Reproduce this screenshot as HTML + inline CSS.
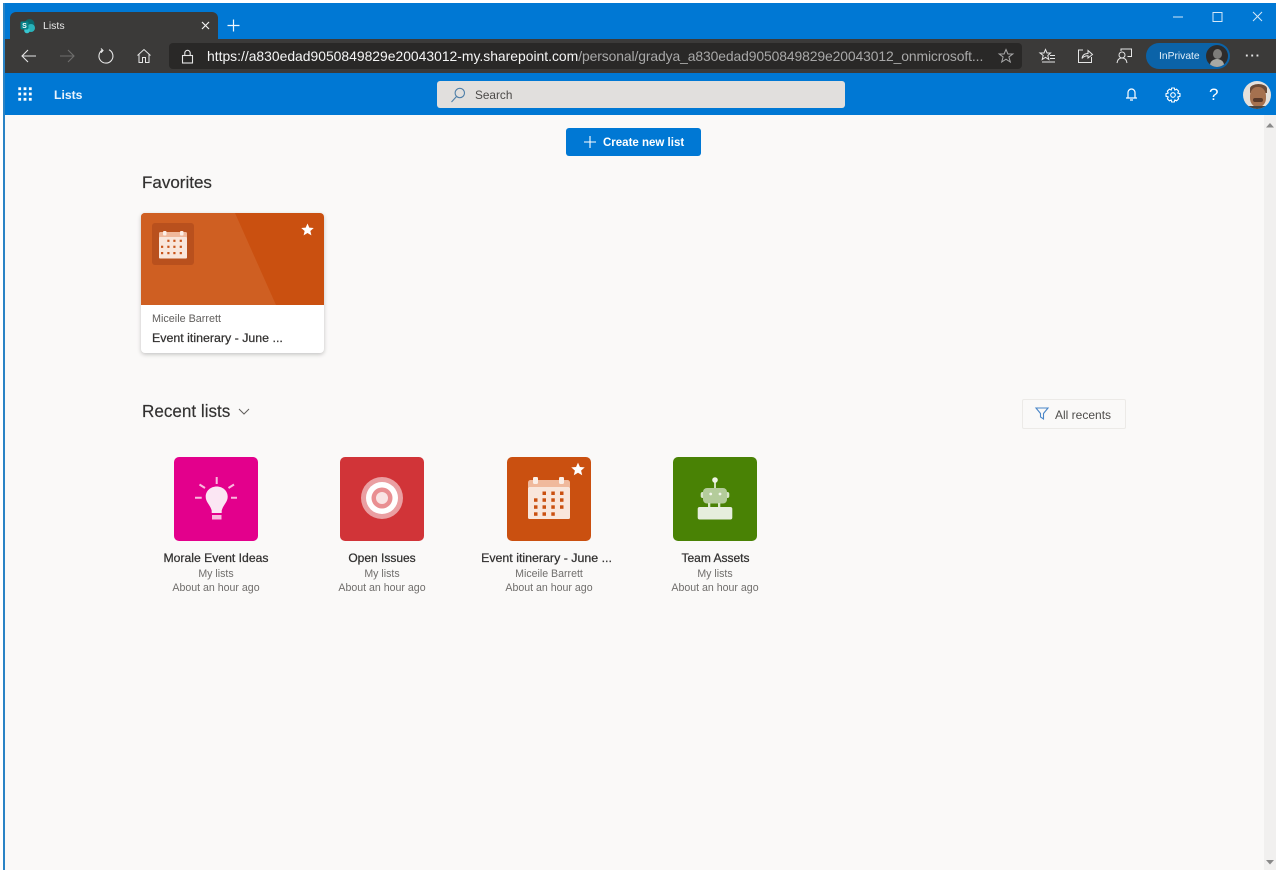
<!DOCTYPE html>
<html lang="en">
<head>
<meta charset="utf-8">
<title>Lists</title>
<style>
html,body{margin:0;padding:0;background:#fff}
body{width:1280px;height:874px;position:relative;overflow:hidden;font-family:"Liberation Sans",sans-serif}
.a{position:absolute}
.t{position:absolute;white-space:nowrap;line-height:1}
svg{position:absolute;overflow:visible}
.ctr{text-align:center;width:170px}
.h{color:#323130;-webkit-text-stroke:.25px #323130;font-size:12px}
.m{font-size:10.600px;color:#706e6c}
</style>
</head>
<body>
<!-- window regions -->
<div class="a" style="left:4px;top:3px;width:1272px;height:36px;background:#0078d4"></div>
<div class="a" style="left:4px;top:39px;width:1272px;height:34px;background:#3b3a39"></div>
<div class="a" style="left:4px;top:73px;width:1272px;height:42px;background:#0078d4"></div>
<div class="a" style="left:4px;top:115px;width:1272px;height:755px;background:#faf9f8"></div>
<div class="a" style="left:3px;top:3px;width:2px;height:867px;background:#2a83c5"></div>
<!-- scrollbar -->
<div class="a" style="left:1264px;top:115px;width:12px;height:755px;background:#f1f0ef"></div>
<svg style="left:0;top:0" width="1280" height="874"><path d="M1266 127.500L1270 123L1274 127.500Z" fill="#8a8a8a"/><path d="M1266 860L1274 860L1270 864.500Z" fill="#8a8a8a"/></svg>

<!-- tab -->
<div class="a" style="left:10px;top:12px;width:208px;height:27px;background:#3b3a39;border-radius:6px 6px 0 0"></div>
<svg style="left:20px;top:18px" width="16" height="16" viewBox="0 0 16 16"><circle cx="9.500" cy="6" r="5" fill="#0b6a6e"/><circle cx="11" cy="10" r="4" fill="#29b3ba"/><circle cx="7" cy="12.500" r="2.800" fill="#37c6d0"/><rect x="0.500" y="3.500" width="8" height="8" rx="1.500" fill="#05838b"/><text x="4.500" y="10" font-family="Liberation Sans" font-size="7" font-weight="700" fill="#fff" text-anchor="middle">S</text></svg>
<div class="t" style="left:43px;top:20.500px;font-size:10.500px;color:#e8e8e8">Lists</div>
<svg style="left:201px;top:21px" width="9" height="9" viewBox="0 0 9 9"><path d="M1 1L8 8M8 1L1 8" stroke="#f2f2f2" stroke-width="1.200" fill="none"/></svg>
<svg style="left:227px;top:19px" width="13" height="13" viewBox="0 0 13 13"><path d="M6.500 0.500V12.500M0.500 6.500H12.500" stroke="#f2f8fd" stroke-width="1.200" fill="none"/></svg>

<!-- window controls -->
<svg style="left:1170px;top:8px" width="100" height="18" viewBox="0 0 100 18" fill="none" stroke="#d5e8f7" stroke-width="1"><path d="M3 9H13"/><rect x="43" y="4.500" width="9" height="9"/><path d="M83 4L92 13M92 4L83 13"/></svg>

<!-- toolbar icons -->
<svg style="left:20px;top:47px" width="18" height="18" viewBox="0 0 18 18" fill="none" stroke="#e6e6e6" stroke-width="1.100"><path d="M2 9H16M8 3L2 9L8 15"/></svg>
<svg style="left:58px;top:47px" width="18" height="18" viewBox="0 0 18 18" fill="none" stroke="#6f6e6d" stroke-width="1.100"><path d="M2 9H16M10 3L16 9L10 15"/></svg>
<svg style="left:97px;top:47px" width="18" height="18" viewBox="0 0 18 18" fill="none" stroke="#e6e6e6" stroke-width="1.100"><path d="M5.500 3A7 7 0 1 0 12 2.800M4 1.500L6 3.500L4 5.800"/></svg>
<svg style="left:136px;top:48px" width="16" height="16" viewBox="0 0 16 16" fill="none" stroke="#e6e6e6" stroke-width="1"><path d="M1.500 7.500L8 1.500L14.500 7.500M3 6.500V14.500H6.500V9.500H9.500V14.500H13V6.500"/></svg>

<!-- address bar -->
<div class="a" style="left:169px;top:43px;width:853px;height:26px;background:#292827;border-radius:4px"></div>
<svg style="left:181px;top:49px" width="13" height="15" viewBox="0 0 13 15" fill="none" stroke="#e6e6e6" stroke-width="1.100"><rect x="1.500" y="6.500" width="10" height="7.500"/><path d="M3.800 6.500V4A2.700 2.700 0 0 1 9.200 4V6.500"/></svg>
<div class="t" style="left:207px;top:50px;font-size:13.900px;color:#f5f5f5">https://a830edad9050849829e20043012-my.sharepoint.com<span style="color:#a8a8a8;letter-spacing:-.1px">/personal/gradya_a830edad9050849829e20043012_onmicrosoft...</span></div>
<svg style="left:998px;top:48px" width="16" height="16" viewBox="0 0 16 16" fill="none" stroke="#a9a9a9" stroke-width="1"><path d="M8 1.500L9.900 6H14.800L10.900 9L12.300 14L8 11.200L3.700 14L5.100 9L1.200 6H6.100Z"/></svg>

<svg style="left:1039px;top:48px" width="17" height="16" viewBox="0 0 17 16" fill="none" stroke="#e6e6e6" stroke-width="1"><path d="M6.500 1.500L8 5H11.500L8.800 7.500L9.800 11.500L6.500 9.300L3.200 11.500L4.200 7.500L1 5H5Z"/><path d="M11 7.500H16M11 10.500H16M3 14H16"/></svg>
<svg style="left:1077px;top:48px" width="16" height="16" viewBox="0 0 16 16" fill="none" stroke="#e6e6e6" stroke-width="1"><path d="M6 2H1.500V14.500H14.500V9"/><path d="M5 10.500C5.500 7 8 5.500 11 5.500V2.500L15.500 6.500L11 10V7.800C9 7.800 6.500 8.500 5 10.500Z"/></svg>
<svg style="left:1116px;top:48px" width="17" height="16" viewBox="0 0 17 16" fill="none" stroke="#e6e6e6" stroke-width="1"><circle cx="6" cy="7" r="3"/><path d="M1 15C1.500 11.500 3.500 10 6 10C8.500 10 10.500 11.500 11 15"/><path d="M5 3V1H15.500V8.500H11.500"/></svg>

<!-- InPrivate pill -->
<div class="a" style="left:1146px;top:43px;width:84px;height:26px;background:#0b63a8;border-radius:13px"></div>
<div class="t" style="left:1159px;top:52px;font-size:10.300px;color:#e3f0fa">InPrivate</div>
<div class="a" style="left:1206px;top:45px;width:22px;height:22px;border-radius:50%;background:#2e2c2b;overflow:hidden">
  <div class="a" style="left:7px;top:4px;width:9px;height:10px;border-radius:50%;background:#7d7c79"></div>
  <div class="a" style="left:4px;top:14px;width:14px;height:12px;border-radius:50%;background:#a9a9a4"></div>
</div>
<div class="t" style="left:1245px;top:49px;font-size:13px;color:#e6e6e6;letter-spacing:1px;font-weight:700">···</div>

<!-- app header -->
<svg style="left:18px;top:87px" width="14" height="14" viewBox="0 0 14 14" fill="#fff"><rect x="0.300" y="0.300" width="2.800" height="2.800"/><rect x="5.600" y="0.300" width="2.800" height="2.800"/><rect x="10.900" y="0.300" width="2.800" height="2.800"/><rect x="0.300" y="5.600" width="2.800" height="2.800"/><rect x="5.600" y="5.600" width="2.800" height="2.800"/><rect x="10.900" y="5.600" width="2.800" height="2.800"/><rect x="0.300" y="10.900" width="2.800" height="2.800"/><rect x="5.600" y="10.900" width="2.800" height="2.800"/><rect x="10.900" y="10.900" width="2.800" height="2.800"/></svg>
<div class="t" style="left:54px;top:89px;font-size:12.200px;font-weight:700;color:#eaf4fc">Lists</div>

<div class="a" style="left:437px;top:81px;width:408px;height:27px;background:#e1dfdd;border-radius:3px"></div>
<svg style="left:450px;top:87px" width="16" height="16" viewBox="0 0 16 16" fill="none" stroke="#4f7fa8" stroke-width="1.100"><circle cx="9.800" cy="6" r="4.700"/><path d="M6.500 9.500L1.500 15"/></svg>
<div class="t" style="left:475px;top:90px;font-size:11.800px;color:#4c4a48">Search</div>

<svg style="left:1125px;top:87px" width="13" height="15" viewBox="0 0 13 15" fill="none" stroke="#fff" stroke-width="1.200"><path d="M3 10.500V5.500A3.500 3.500 0 0 1 10 5.500V10.500M1 11H12M5 13H8"/></svg>
<svg style="left:1165px;top:87px" width="16" height="16" viewBox="0 0 16 16" fill="none" stroke="#fff" stroke-width="1.100"><circle cx="8" cy="8" r="2.300"/><path d="M6.700 1H9.300L9.800 3L11.600 2.200L13.600 4.100L12.800 6L15 6.700V9.300L12.800 10L13.600 11.900L11.600 13.800L9.800 13L9.300 15H6.700L6.200 13L4.400 13.800L2.400 11.900L3.200 10L1 9.300V6.700L3.200 6L2.400 4.100L4.400 2.200L6.200 3Z"/></svg>
<div class="t" style="left:1209px;top:86px;font-size:17px;color:#fff">?</div>
<div class="a" style="left:1243px;top:81px;width:28px;height:28px;border-radius:50%;background:#e4e0db;overflow:hidden">
  <div class="a" style="left:7px;top:3px;width:17px;height:9px;background:#6a4a36;border-radius:50% 50% 0 0"></div>
  <div class="a" style="left:7px;top:6px;width:16px;height:20px;border-radius:45%;background:#a5714f"></div>
  <div class="a" style="left:10px;top:17px;width:10px;height:4px;background:#5a3a2a;border-radius:2px"></div>
  <div class="a" style="left:4px;top:25px;width:22px;height:5px;background:#4b4642"></div>
</div>

<!-- create button -->
<div class="a" style="left:566px;top:128px;width:135px;height:28px;background:#0078d4;border-radius:3px"></div>
<svg style="left:584px;top:136px" width="12" height="12" viewBox="0 0 12 12"><path d="M6 0V12M0 6H12" stroke="#fff" stroke-width="1.100" fill="none"/></svg>
<div class="t" style="left:603px;top:137.500px;font-size:11.500px;font-weight:700;color:#fff">Create new list</div>

<!-- Favorites -->
<div class="t" style="left:142px;top:174px;font-size:17px;color:#323130;-webkit-text-stroke:.2px #323130">Favorites</div>
<div class="a" style="left:141px;top:213px;width:183px;height:140px;background:#fff;border-radius:4px;box-shadow:0 1.500px 4px rgba(0,0,0,.22)"></div>
<svg style="left:141px;top:213px" width="183" height="92" viewBox="0 0 183 92"><path d="M4 0H179A4 4 0 0 1 183 4V92H0V4A4 4 0 0 1 4 0Z" fill="#ca5010"/><path d="M4 0H94L135 92H0V4A4 4 0 0 1 4 0Z" fill="#cf5f22"/></svg>
<div class="a" style="left:152px;top:223px;width:42px;height:42px;background:#b9501d;border-radius:3px"></div>
<svg style="left:159px;top:231px" width="28" height="28" viewBox="0 0 28 28"><rect x="0" y="1" width="28" height="7" rx="1.500" fill="#f0b99c"/><rect x="0" y="6" width="28" height="21.500" rx="1" fill="#f9e6db"/><rect x="4" y="0" width="3.500" height="4.500" rx="1" fill="#fbeee6"/><rect x="21" y="0" width="3.500" height="4.500" rx="1" fill="#fbeee6"/><g fill="#c9541a"><rect x="8.300" y="8.700" width="2.200" height="2.200"/><rect x="14.300" y="8.700" width="2.200" height="2.200"/><rect x="20.700" y="8.700" width="2.200" height="2.200"/><rect x="2" y="14.700" width="2.200" height="2.200"/><rect x="8.300" y="14.700" width="2.200" height="2.200"/><rect x="14.300" y="14.700" width="2.200" height="2.200"/><rect x="20.700" y="14.700" width="2.200" height="2.200"/><rect x="2" y="21" width="2.200" height="2.200"/><rect x="8.300" y="21" width="2.200" height="2.200"/><rect x="14.300" y="21" width="2.200" height="2.200"/><rect x="20.700" y="21" width="2.200" height="2.200"/></g></svg>
<svg style="left:301px;top:223px" width="13" height="13" viewBox="0 0 24 24"><path d="M12 1L15.300 8.500L23.500 9.300L17.300 14.700L19.200 22.800L12 18.500L4.800 22.800L6.700 14.700L.5 9.300L8.700 8.500Z" fill="#fff"/></svg>
<div class="t" style="left:152px;top:314px;font-size:10.800px;color:#605e5c">Miceile Barrett</div>
<div class="t" style="left:152px;top:331.500px;font-size:12.400px;color:#323130;-webkit-text-stroke:.25px #323130">Event itinerary - June ...</div>

<!-- Recent lists -->
<div class="t" style="left:142px;top:403px;font-size:17.100px;color:#323130;-webkit-text-stroke:.15px #323130">Recent lists</div>
<svg style="left:238px;top:408px" width="12" height="8" viewBox="0 0 12 8"><path d="M1 1L6 6L11 1" stroke="#605e5c" stroke-width="1" fill="none"/></svg>

<div class="a" style="left:1022px;top:399px;width:102px;height:28px;border:1px solid #eceae7;border-radius:2px"></div>
<svg style="left:1035px;top:407px" width="14" height="13" viewBox="0 0 14 13" fill="none" stroke="#4a86c8" stroke-width="1.100"><path d="M1 1H13L8.500 6.500V12L5.500 10V6.500Z"/></svg>
<div class="t" style="left:1055px;top:409px;font-size:12px;color:#4f4d4b">All recents</div>

<!-- Tiles -->
<div class="a" style="left:174px;top:457px;width:84px;height:84px;background:#e3008c;border-radius:5px"></div>
<svg style="left:195px;top:477px" width="42" height="44" viewBox="0 0 42 44"><path d="M21.700 9.500C15.500 9.500 10.700 14 10.700 19.700C10.700 25 15 27.500 16.700 33.500V36H26.700V33.500C28.400 27.500 32.700 25 32.700 19.700C32.700 14 27.900 9.500 21.700 9.500Z" fill="#fbe6f3"/><rect x="17" y="38" width="9.500" height="4.500" fill="#f9b9de"/><g stroke="#f9b9de" stroke-width="2" fill="none"><path d="M21.700 0V7M4.500 7.500L10 11M39 7.500L33.500 11M0 20.700H6.700M36 20.700H42"/></g></svg>

<div class="a" style="left:340px;top:457px;width:84px;height:84px;background:#d13438;border-radius:5px"></div>
<svg style="left:361px;top:477px" width="42" height="42" viewBox="0 0 42 42"><circle cx="21" cy="21" r="21" fill="#ea9fa2"/><circle cx="21" cy="21" r="16" fill="#fff"/><circle cx="21" cy="21" r="10.500" fill="#e98f92"/><circle cx="21" cy="21" r="6" fill="#f9e4e4"/></svg>

<div class="a" style="left:507px;top:457px;width:84px;height:84px;background:#ca5010;border-radius:5px"></div>
<svg style="left:527px;top:477px" width="44" height="44" viewBox="0 0 44 44"><rect x="1" y="3" width="42" height="9" rx="2.500" fill="#f0b99c"/><rect x="1" y="10" width="42" height="32" rx="1.500" fill="#f9e6db"/><rect x="6" y="0" width="5" height="7" rx="1.200" fill="#fbeee6"/><rect x="32" y="0" width="5" height="7" rx="1.200" fill="#fbeee6"/><g fill="#ca5010"><rect x="15.500" y="14.500" width="3.500" height="3.500"/><rect x="24.300" y="14.500" width="3.500" height="3.500"/><rect x="33" y="14.500" width="3.500" height="3.500"/><rect x="7" y="21.300" width="3.500" height="3.500"/><rect x="15.500" y="21.300" width="3.500" height="3.500"/><rect x="24.300" y="21.300" width="3.500" height="3.500"/><rect x="33" y="21.300" width="3.500" height="3.500"/><rect x="7" y="28.300" width="3.500" height="3.500"/><rect x="15.500" y="28.300" width="3.500" height="3.500"/><rect x="24.300" y="28.300" width="3.500" height="3.500"/><rect x="33" y="28.300" width="3.500" height="3.500"/><rect x="7" y="35.300" width="3.500" height="3.500"/><rect x="15.500" y="35.300" width="3.500" height="3.500"/><rect x="24.300" y="35.300" width="3.500" height="3.500"/></g></svg>
<svg style="left:571px;top:462px" width="14" height="14" viewBox="0 0 24 24"><path d="M12 1L15.300 8.500L23.500 9.300L17.300 14.700L19.200 22.800L12 18.500L4.800 22.800L6.700 14.700L.5 9.300L8.700 8.500Z" fill="#fff"/></svg>

<div class="a" style="left:673px;top:457px;width:84px;height:84px;background:#498205;border-radius:5px"></div>
<svg style="left:697px;top:477px" width="36" height="44" viewBox="0 0 36 44"><circle cx="18" cy="3" r="2.800" fill="#eef4e6"/><rect x="17.200" y="4" width="1.600" height="8" fill="#eef4e6"/><rect x="3.700" y="15" width="4" height="6" rx="2" fill="#d7e5c8"/><rect x="28.300" y="15" width="4" height="6" rx="2" fill="#d7e5c8"/><rect x="6" y="11" width="24" height="15.500" rx="4" fill="#b4cc9b"/><circle cx="13.700" cy="17" r="1.400" fill="#f4f8ee"/><circle cx="23" cy="17" r="1.400" fill="#f4f8ee"/><rect x="11" y="26" width="2.300" height="5" fill="#d7e5c8"/><rect x="21" y="26" width="2.300" height="5" fill="#d7e5c8"/><rect x="0.700" y="30" width="34.600" height="12.500" rx="2" fill="#e6eedd"/></svg>

<div class="t ctr h" style="left:131px;top:552px;font-size:12.200px">Morale Event Ideas</div>
<div class="t ctr m" style="left:131px;top:568.500px">My lists</div>
<div class="t ctr m" style="left:131px;top:582.500px">About an hour ago</div>

<div class="t ctr h" style="left:297px;top:552px">Open Issues</div>
<div class="t ctr m" style="left:297px;top:568.500px">My lists</div>
<div class="t ctr m" style="left:297px;top:582.500px">About an hour ago</div>

<div class="t ctr h" style="left:461.500px;top:552px;font-size:12.400px">Event itinerary - June ...</div>
<div class="t ctr m" style="left:464px;top:568.500px">Miceile Barrett</div>
<div class="t ctr m" style="left:464px;top:582.500px">About an hour ago</div>

<div class="t ctr h" style="left:630.500px;top:552px">Team Assets</div>
<div class="t ctr m" style="left:630px;top:568.500px">My lists</div>
<div class="t ctr m" style="left:630px;top:582.500px">About an hour ago</div>
</body>
</html>
